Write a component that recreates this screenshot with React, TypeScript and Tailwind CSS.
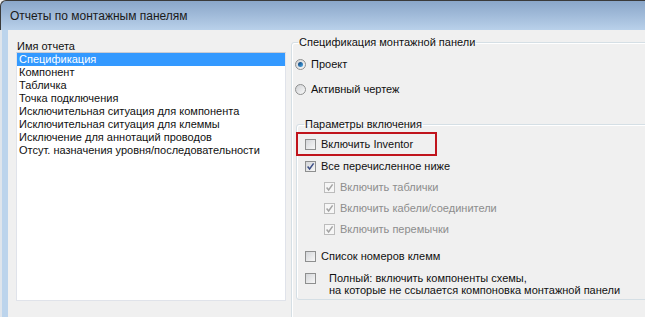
import React from "react";

const Box = ({ checked, disabled }: { checked?: boolean; disabled?: boolean }) => (
  <span
    className={`flex h-[11px] w-[11px] shrink-0 items-center justify-center border ${
      disabled
        ? "border-[#bcbcbc] bg-[#f6f6f6]"
        : "border-[#8e8f8f] bg-gradient-to-br from-[#d4d6d9] to-[#f7f7f7]"
    }`}
  >
    {checked && (
      <svg viewBox="0 0 9 9" className="h-[9px] w-[9px]">
        <path
          d="M1.6 4.6 L3.6 7 L7.6 1.4"
          fill="none"
          stroke={disabled ? "#a4a4a4" : "#3d4f86"}
          strokeWidth="1.5"
        />
      </svg>
    )}
  </span>
);

const Radio = ({ checked }: { checked?: boolean }) => (
  <span className="flex h-[11px] w-[11px] shrink-0 items-center justify-center rounded-full border border-[#8e8f8f] bg-gradient-to-br from-[#cfd1d4] to-[#fafafa]">
    {checked && (
      <span className="h-[5px] w-[5px] rounded-full bg-gradient-to-br from-[#0b3a6e] to-[#4fb0f0]" />
    )}
  </span>
);

const Row = ({
  children,
  className = "",
  dim,
}: {
  children: React.ReactNode;
  className?: string;
  dim?: boolean;
}) => (
  <div className={`flex h-[13px] items-center gap-[5px] whitespace-nowrap leading-[13px] ${dim ? "text-[#8d8d8d]" : ""} ${className}`}>
    {children}
  </div>
);

const reports = [
  "Спецификация",
  "Компонент",
  "Табличка",
  "Точка подключения",
  "Исключительная ситуация для компонента",
  "Исключительная ситуация для клеммы",
  "Исключение для аннотаций проводов",
  "Отсут. назначения уровня/последовательности",
];

export default function App() {
  return (
    <div className="h-[317px] w-[645px] overflow-hidden bg-[#f0f0f0] font-['Liberation_Sans',Arial,sans-serif] text-[11px] text-[#111]">
      {/* title bar */}
      <div className="flex h-[30px] items-center rounded-tl-[6px] border-l border-t border-[#3a3a3a] bg-gradient-to-b from-[#8aa6c9] to-[#b9d1ea] pl-[9px] text-[12px] text-[#1a1a1a]">
        Отчеты по монтажным панелям
      </div>

      <div className="flex h-[287px]">
        <div className="w-[2px] shrink-0 bg-[#dfe5ec]" />
        <div className="w-[6px] shrink-0 bg-[#bcd4ec]" />

        <div className="flex min-w-0 flex-1">
          {/* left column */}
          <div className="ml-[8px] w-[270px] shrink-0 pt-[10px]">
            <div className="pl-[1px] leading-[12px]">Имя отчета</div>
            <div className="h-[249px] border border-[#e0e3ea] border-t-[#c9ccd4] bg-white">
              {reports.map((r, i) => (
                <div
                  key={r}
                  className={`h-[13px] whitespace-nowrap pl-[2px] leading-[13px] ${i === 0 ? "bg-[#3399ff] text-white" : ""}`}
                >
                  {r}
                </div>
              ))}
            </div>
          </div>

          {/* right column */}
          <fieldset className="ml-[5px] mt-[6px] h-[320px] w-[420px] shrink-0 rounded-[3px] border border-[#d5dfe5] pl-[3px] shadow-[inset_1px_1px_0_#fff]">
            <legend className="ml-[3px] px-[1px] leading-[13px]">Спецификация монтажной панели</legend>

            <Row className="mt-[9px]">
              <Radio checked />
              Проект
            </Row>
            <Row className="mt-[12px]">
              <Radio />
              Активный чертеж
            </Row>

            <fieldset className="ml-[1px] mt-[22px] w-[420px] rounded-[3px] border border-[#d5dfe5] pb-[3px] pl-[8px] shadow-[inset_1px_1px_0_#fff]">
              <legend className="-ml-[1px] px-[1px] leading-[13px]">Параметры включения</legend>

              <div className="-ml-[9px] mt-[1px] flex h-[24px] w-[141px] items-center border-2 border-[#c0141c] pl-[7px]">
                <Row>
                  <Box />
                  Включить Inventor
                </Row>
              </div>

              <Row className="mt-[4px]">
                <Box checked />
                Все перечисленное ниже
              </Row>
              <Row className="ml-[19px] mt-[8px]" dim>
                <Box checked disabled />
                Включить таблички
              </Row>
              <Row className="ml-[19px] mt-[8px]" dim>
                <Box checked disabled />
                Включить кабели/соединители
              </Row>
              <Row className="ml-[19px] mt-[8px]" dim>
                <Box checked disabled />
                Включить перемычки
              </Row>

              <Row className="mt-[14px]">
                <Box />
                Список номеров клемм
              </Row>

              <div className="mt-[9px] flex items-start gap-[13px]">
                <span className="mt-[1px]">
                  <Box />
                </span>
                <div className="whitespace-nowrap leading-[12px]">
                  Полный: включить компоненты схемы,
                  <br />
                  на которые не ссылается компоновка монтажной панели
                </div>
              </div>
            </fieldset>
          </fieldset>
        </div>
      </div>
    </div>
  );
}
